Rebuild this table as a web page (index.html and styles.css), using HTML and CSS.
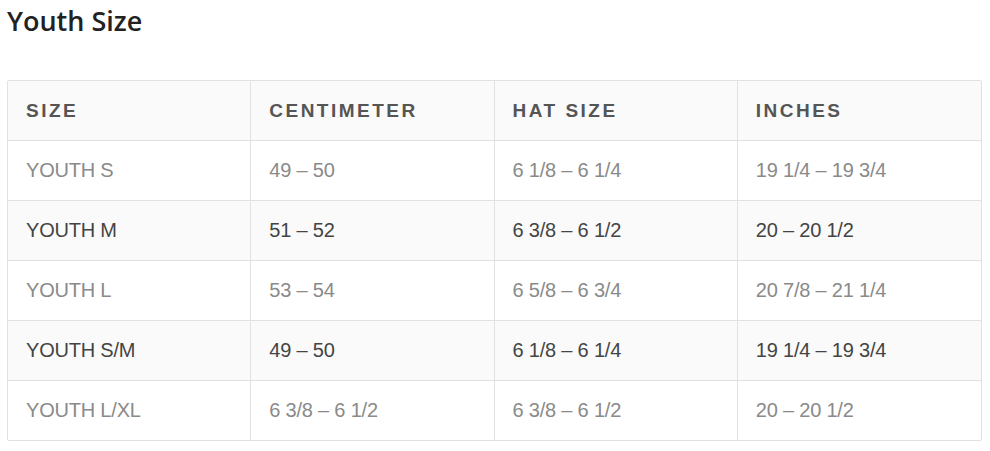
FILE: index.html
```html
<!DOCTYPE html>
<html>
<head>
<meta charset="utf-8">
<link rel="stylesheet" href="styles.css">
</head>
<body>
<div class="page">
  <h2 class="title">Youth Size</h2>
  <table class="sizes">
    <thead>
      <tr><th>Size</th><th>Centimeter</th><th>Hat Size</th><th>Inches</th></tr>
    </thead>
    <tbody>
      <tr><td>YOUTH S</td><td>49 – 50</td><td>6 1/8 – 6 1/4</td><td>19 1/4 – 19 3/4</td></tr>
      <tr><td>YOUTH M</td><td>51 – 52</td><td>6 3/8 – 6 1/2</td><td>20 – 20 1/2</td></tr>
      <tr><td>YOUTH L</td><td>53 – 54</td><td>6 5/8 – 6 3/4</td><td>20 7/8 – 21 1/4</td></tr>
      <tr><td>YOUTH S/M</td><td>49 – 50</td><td>6 1/8 – 6 1/4</td><td>19 1/4 – 19 3/4</td></tr>
      <tr><td>YOUTH L/XL</td><td>6 3/8 – 6 1/2</td><td>6 3/8 – 6 1/2</td><td>20 – 20 1/2</td></tr>
    </tbody>
  </table>
</div>
</body>
</html>
```
FILE: styles.css
```css
html, body { margin: 0; padding: 0; background: #fff; }
.page { padding: 0 9px 0 7px; }
.title {
  margin: 0;
  padding-top: 3px;
  height: 77px;
  font-family: "Open Sans", sans-serif;
  font-weight: 600;
  font-size: 27px;
  line-height: 36px;
  color: #222;
}
.sizes {
  width: 975px;
  border-collapse: separate;
  border-spacing: 0;
  border: 1px solid #e1e1e1;
  border-radius: 2px;
  table-layout: fixed;
  font-family: "Liberation Sans", Arial, sans-serif;
}
.sizes th, .sizes td {
  text-align: left;
  padding: 0 0 0 18px;
  height: 59px;
  border-right: 1px solid #e1e1e1;
  border-bottom: 1px solid #e1e1e1;
  vertical-align: middle;
}
.sizes tr > :last-child { border-right: none; }
.sizes tbody tr:last-child td { border-bottom: none; }
.sizes th {
  background: #fafafa;
  color: #555;
  font-size: 19px;
  font-weight: 700;
  letter-spacing: 2.5px;
  text-transform: uppercase;
}
.sizes td {
  font-size: 20px;
  letter-spacing: -0.2px;
  color: #8a8a8a;
}
.sizes tbody tr:nth-child(even) td {
  background: #fafafa;
  color: #444;
}
```
